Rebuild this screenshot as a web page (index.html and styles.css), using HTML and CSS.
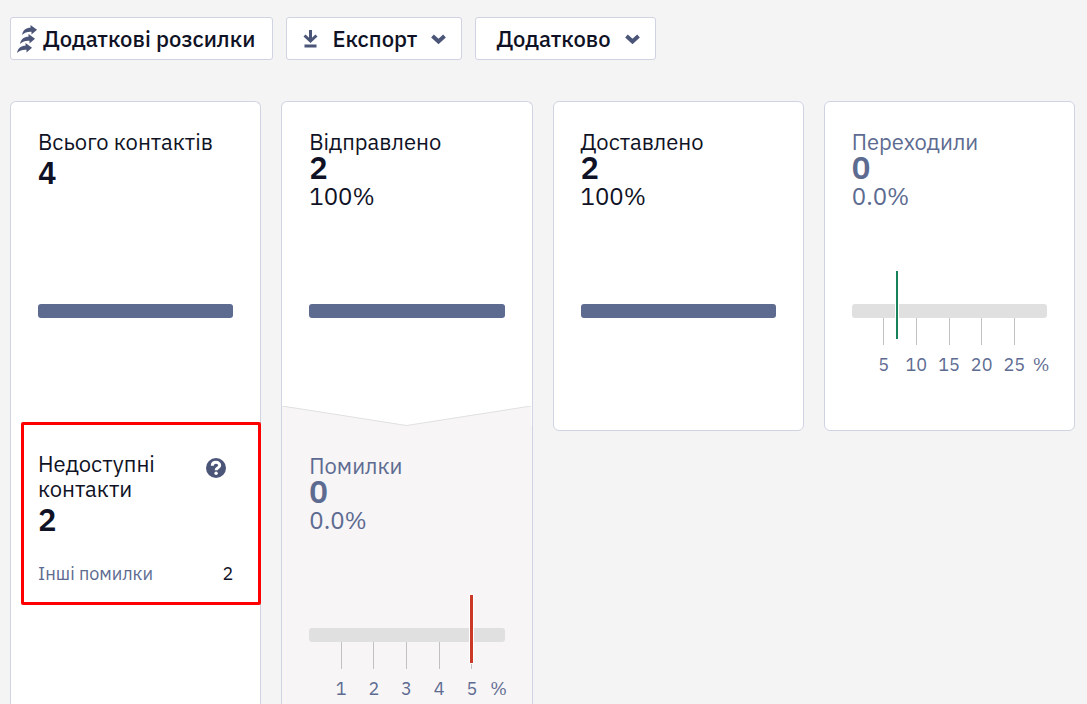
FILE: index.html
```html
<!DOCTYPE html>
<html lang="uk">
<head>
  <meta charset="UTF-8" />
  <meta name="viewport" content="width=device-width, initial-scale=1" />
  <title>Звіт про розсилку</title>
  <link rel="stylesheet" href="styles.css">
</head>
<body>

  <!-- toolbar -->
  <div class="toolbar">
    <button type="button" class="btn btn-more">
      <svg class="ico-arrows" viewBox="0 0 20 28" aria-hidden="true">
        <path id="arrow" d="M5 10C6 5 9 2.800 13.500 2.800V0L20 4.700 14.500 9.500V6.800C10.500 6.500 8 7.500 5 10z"/>
        <use href="#arrow" x="-2" y="9"/>
        <use href="#arrow" x="-5" y="18"/>
      </svg>
      Додаткові розсилки
    </button>
    <button type="button" class="btn btn-export">
      <svg class="ico-download" viewBox="0 0 15 18" aria-hidden="true">
        <path d="M7.500 0v10M1.500 5.500l6 5.500 6-5.500M1.500 16h12"/>
      </svg>
      Експорт
      <svg class="ico-chevron" viewBox="0 0 15 10" aria-hidden="true"><path d="M1.500 2l6 5.500 6-5.500"/></svg>
    </button>
    <button type="button" class="btn btn-extra">
      Додатково
      <svg class="ico-chevron" viewBox="0 0 15 10" aria-hidden="true"><path d="M1.500 2l6 5.500 6-5.500"/></svg>
    </button>
  </div>

  <!-- statistics -->
  <main class="stats">

    <div class="card card-tall">
      <section class="metric metric-total">
        <h2 class="label">Всього контактів</h2>
        <p class="num">4</p>
        <div class="bar bar-full"></div>
      </section>

      <section class="missing">
        <div class="missing-head">
          <h2 class="label">Недоступні контакти</h2>
          <button type="button" class="help" aria-label="Довідка">
            <svg viewBox="0 0 20 20" aria-hidden="true">
              <circle cx="10" cy="10" r="10"/>
              <path d="M6.300 7.800C6.300 5.500 8 4.300 10 4.300s3.700 1.200 3.700 3.100c0 2.300-3.600 2.200-3.600 4.800"/>
              <circle class="dot" cx="10.100" cy="15.200" r="1.700"/>
            </svg>
          </button>
        </div>
        <p class="num">2</p>
        <p class="row"><span class="row-name">Інші помилки</span><span>2</span></p>
      </section>
    </div>

    <div class="card card-tall">
      <section class="metric">
        <h2 class="label">Відправлено</h2>
        <p class="num">2</p>
        <p class="percent">100%</p>
        <div class="bar bar-full"></div>
      </section>

      <svg class="notch" viewBox="0 0 250 20" preserveAspectRatio="none" aria-hidden="true">
        <path class="notch-fill" d="M0 0l125 19.500L250 0v20H0z"/>
        <path class="notch-line" d="M0 0l125 19.500L250 0"/>
      </svg>

      <section class="metric metric-errors muted">
        <h2 class="label">Помилки</h2>
        <p class="num">0</p>
        <p class="percent">0.0%</p>
        <div class="bar"><span class="marker marker-red" style="left: 82.5%"></span></div>
        <div class="scale">
          <span>1</span><span>2</span><span>3</span><span>4</span><span>5</span><span class="unit">%</span>
        </div>
      </section>
    </div>

    <div class="card">
      <section class="metric">
        <h2 class="label">Доставлено</h2>
        <p class="num">2</p>
        <p class="percent">100%</p>
        <div class="bar bar-full"></div>
      </section>
    </div>

    <div class="card">
      <section class="metric muted">
        <h2 class="label">Переходили</h2>
        <p class="num">0</p>
        <p class="percent">0.0%</p>
        <div class="bar"><span class="marker" style="left: 22.5%"></span></div>
        <div class="scale">
          <span>5</span><span>10</span><span>15</span><span>20</span><span>25</span><span class="unit">%</span>
        </div>
      </section>
    </div>

  </main>

</body>
</html>
```
FILE: styles.css
```css
* {
  box-sizing: border-box;
}

body {
  margin: 0;
  padding: 17px 12px 0 10px;
  min-height: 100vh;
  display: flex;
  flex-direction: column;
  gap: 41px;
  font-family: "IBM Plex Sans", "Noto Sans", sans-serif;
  font-size: 22px;
  line-height: 25px;
  background: #f4f4f4;
  color: #0f1225;
}

h2, p {
  margin: 0;
}

button {
  font-family: inherit;
  cursor: pointer;
}

/* toolbar */
.toolbar {
  display: flex;
  flex-wrap: wrap;
  gap: 13px;
}

.btn {
  display: flex;
  align-items: center;
  gap: 14px;
  padding: 8px 15px 8px 20px;
  font-size: 22px;
  font-weight: 500;
  line-height: 25px;
  color: #0f1225;
  background: #fff;
  border: 1px solid #d0d3e2;
  border-radius: 3px;
}

.btn:hover {
  background: #f8f8fb;
}

.btn-more {
  padding: 8px 17px 8px 6px;
  gap: 6px;
}

.btn-export {
  padding-left: 16px;
}

.ico-arrows {
  width: 20px;
  height: 28px;
  margin: -2px 0;
  fill: #4a5578;
}

.ico-download {
  width: 15px;
  height: 18px;
}

.ico-chevron {
  width: 15px;
  height: 10px;
}

.ico-download path,
.ico-chevron path {
  fill: none;
  stroke: #4a5578;
  stroke-width: 3;
}

.ico-chevron path {
  stroke-width: 4;
}

/* cards */
.stats {
  flex: 1;
  display: grid;
  grid-template-columns: repeat(4, 1fr);
  gap: 20px;
}

.card {
  align-self: start;
  display: flex;
  flex-direction: column;
  min-height: 330px;
  background: #fff;
  border: 1px solid #d0d3e2;
  border-radius: 6px;
}

.card-tall {
  align-self: stretch;
  border-bottom: none;
  border-radius: 6px 6px 0 0;
}

.metric {
  display: flex;
  flex-direction: column;
  min-height: 304px;
  padding: 27px 27px 0;
}

.metric-total {
  min-height: 320px;
}

.label {
  font-size: 22px;
  font-weight: 400;
}

.num {
  font-size: 31px;
  font-weight: 600;
  line-height: 28px;
}

.metric-total .num,
.missing .num {
  line-height: 38px;
}

.percent {
  font-size: 24px;
  line-height: 28px;
}

.num + .percent {
  margin-bottom: 94px;
}

.metric-total .num {
  margin-bottom: 112px;
}

.muted {
  color: #5d6b91;
}

.bar {
  position: relative;
  height: 14px;
  background: #e0e0e0;
  border-radius: 3px;
}

.bar-full {
  background: #5d6b91;
}

.marker {
  position: absolute;
  top: -33px;
  width: 2px;
  height: 68px;
  background: #178259;
  outline: 1px solid #fff;
}

.marker-red {
  width: 3px;
  background: #ca3826;
}

.scale {
  display: grid;
  grid-template-columns: repeat(5, 2fr) 1fr;
  padding-left: 8%;
  font-size: 18px;
}

.scale span {
  display: flex;
  flex-direction: column;
  align-items: center;
  min-width: 0;
}

.scale span::before {
  content: "";
  width: 1px;
  height: 27px;
  margin-bottom: 7px;
  background: #c1c1c1;
}

.scale .unit {
  align-items: flex-start;
  padding-left: 2px;
}

.scale .unit::before {
  background: none;
}

/* unavailable contacts */
.missing {
  margin: 0 -1px 0 10px;
  padding: 26px 25px 16px 14px;
  border: 3px solid #f00;
  border-radius: 2px;
}

.missing-head {
  display: flex;
  justify-content: space-between;
  align-items: flex-start;
}

.missing-head .label {
  width: min-content;
}

.help {
  margin: 7px 7px 0 0;
  padding: 0;
  width: 20px;
  height: 20px;
  background: none;
  border: none;
}

.help svg {
  display: block;
}

.help circle {
  fill: #4a5578;
}

.help path {
  fill: none;
  stroke: #fff;
  stroke-width: 3;
}

.help .dot {
  fill: #fff;
}

.row {
  display: flex;
  justify-content: space-between;
  margin-top: 22px;
  font-size: 18px;
}

.row-name {
  color: #5d6b91;
}

/* errors */
.notch {
  display: block;
  width: 100%;
  height: 20px;
}

.notch-fill {
  fill: #f7f5f6;
}

.notch-line {
  fill: none;
  stroke: #e0e0e0;
  vector-effect: non-scaling-stroke;
}

.metric-errors {
  flex: 1;
  min-height: 0;
  background: #f7f5f6;
}
```
